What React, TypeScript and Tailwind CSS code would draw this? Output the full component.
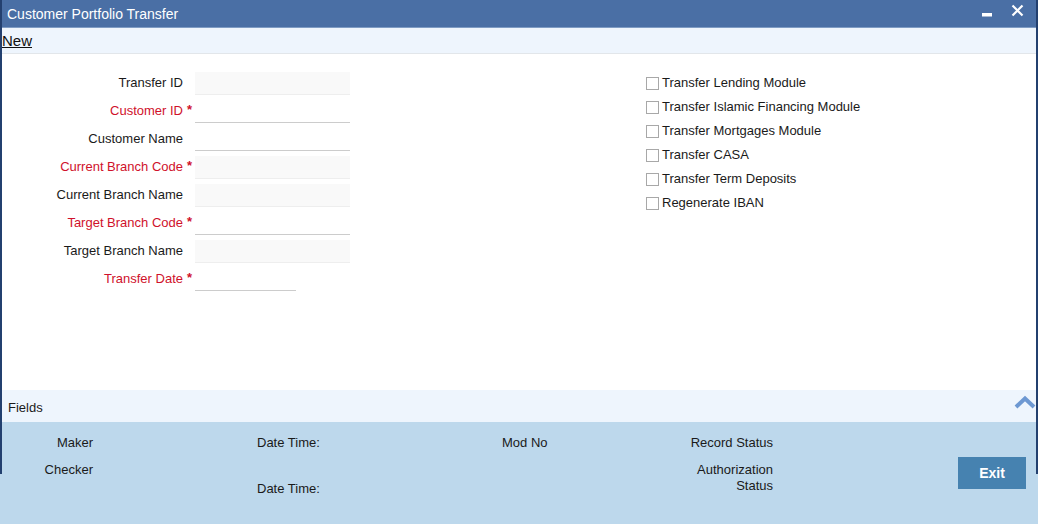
import React from "react";

const font = { fontFamily: '"Liberation Sans", Arial, sans-serif' };

type Row = { label: string; req?: boolean; disabled?: boolean; short?: boolean };

const rows: Row[] = [
  { label: "Transfer ID", disabled: true },
  { label: "Customer ID", req: true },
  { label: "Customer Name" },
  { label: "Current Branch Code", req: true, disabled: true },
  { label: "Current Branch Name", disabled: true },
  { label: "Target Branch Code", req: true },
  { label: "Target Branch Name", disabled: true },
  { label: "Transfer Date", req: true, short: true },
];

const checks = [
  "Transfer Lending Module",
  "Transfer Islamic Financing Module",
  "Transfer Mortgages Module",
  "Transfer CASA",
  "Transfer Term Deposits",
  "Regenerate IBAN",
];

export default function App() {
  return (
    <div
      className="relative w-[1038px] h-[524px] flex flex-col bg-white text-[13px] text-[#1a1a1a] overflow-hidden"
      style={font}
    >
      {/* title bar */}
      <div className="h-[28px] shrink-0 bg-[#4a6fa5] border-b border-[#7f9cc4] flex items-center pl-[7px] pr-[14px]">
        <span className="text-white text-[14px] leading-none">Customer Portfolio Transfer</span>
        <div className="ml-auto flex items-center gap-[19px]">
          <svg width="10" height="4" viewBox="0 0 10 4" className="mt-[2px]">
            <rect x="0" y="0" width="10" height="3.5" fill="#fff" />
          </svg>
          <svg width="13" height="13" viewBox="0 0 13 13" className="-mt-[6px]">
            <path d="M1.5 1.5 L11.5 11.5 M11.5 1.5 L1.5 11.5" stroke="#fff" strokeWidth="2.2" />
          </svg>
        </div>
      </div>

      {/* New bar */}
      <div className="h-[26px] shrink-0 bg-[#eef5fd] border-b border-[#e2e6ea] flex items-center pl-[2px]">
        <span className="text-[15px] underline text-[#111] leading-none">New</span>
      </div>

      {/* main form */}
      <div className="flex-1 flex pt-[15px]">
        <div className="w-[646px] shrink-0 flex flex-col">
          {rows.map((r) => (
            <div key={r.label} className="h-[28px] flex items-center">
              <div
                className={`w-[183px] text-right ${r.req ? "text-[#d0112b]" : "text-[#1a1a1a]"}`}
              >
                {r.label}
              </div>
              <div className="w-[12px] h-full relative">
                {r.req && (
                  <span className="absolute left-[4px] top-[6px] text-[#d0112b] text-[13px] font-bold leading-none">
                    *
                  </span>
                )}
              </div>
              <div
                className={`${r.short ? "w-[101px]" : "w-[155px]"} h-[23px] mt-[1px] border-b ${
                  r.disabled ? "bg-[#f9f9f9] border-[#eeeeee]" : "bg-white border-[#cccccc]"
                }`}
              />
            </div>
          ))}
        </div>
        <div className="flex flex-col pt-[2px]">
          {checks.map((c) => (
            <div key={c} className="h-[24px] flex items-center">
              <div className="w-[13px] h-[13px] border border-[#a8a8a8] bg-white mr-[3px]" />
              <span>{c}</span>
            </div>
          ))}
        </div>
      </div>

      {/* Fields bar */}
      <div className="h-[32px] shrink-0 bg-[#eef5fd] flex items-center pl-[8px] pr-[2px]">
        <span className="mt-[3px]">Fields</span>
        <svg width="22" height="14" viewBox="0 0 22 14" className="ml-auto -mt-[8px]">
          <path d="M2 12 L11 3.5 L20 12" stroke="#6d98d2" strokeWidth="4" fill="none" strokeLinejoin="miter" />
        </svg>
      </div>

      {/* footer */}
      <div className="h-[102px] shrink-0 bg-[#bdd8ec] flex pt-[13px] leading-[16px]">
        <div className="w-[93px] text-right flex flex-col">
          <span>Maker</span>
          <span className="mt-[11px]">Checker</span>
        </div>
        <div className="ml-[164px] w-[245px] flex flex-col">
          <span>Date Time:</span>
          <span className="mt-[30px]">Date Time:</span>
        </div>
        <div className="w-[140px]">
          <span>Mod No</span>
        </div>
        <div className="w-[131px] text-right flex flex-col">
          <span>Record Status</span>
          <span className="mt-[11px]">Authorization</span>
          <span>Status</span>
        </div>
        <div className="ml-[185px] mt-[22px]">
          <button className="w-[68px] h-[32px] bg-[#4682b0] text-white text-[14px] font-bold">
            Exit
          </button>
        </div>
      </div>

      {/* window frame borders */}
      <div className="absolute left-0 top-0 w-[2px] h-[474px] bg-[#23406f]" />
      <div className="absolute right-0 top-0 w-[2px] h-[474px] bg-[#23406f]" />
    </div>
  );
}
